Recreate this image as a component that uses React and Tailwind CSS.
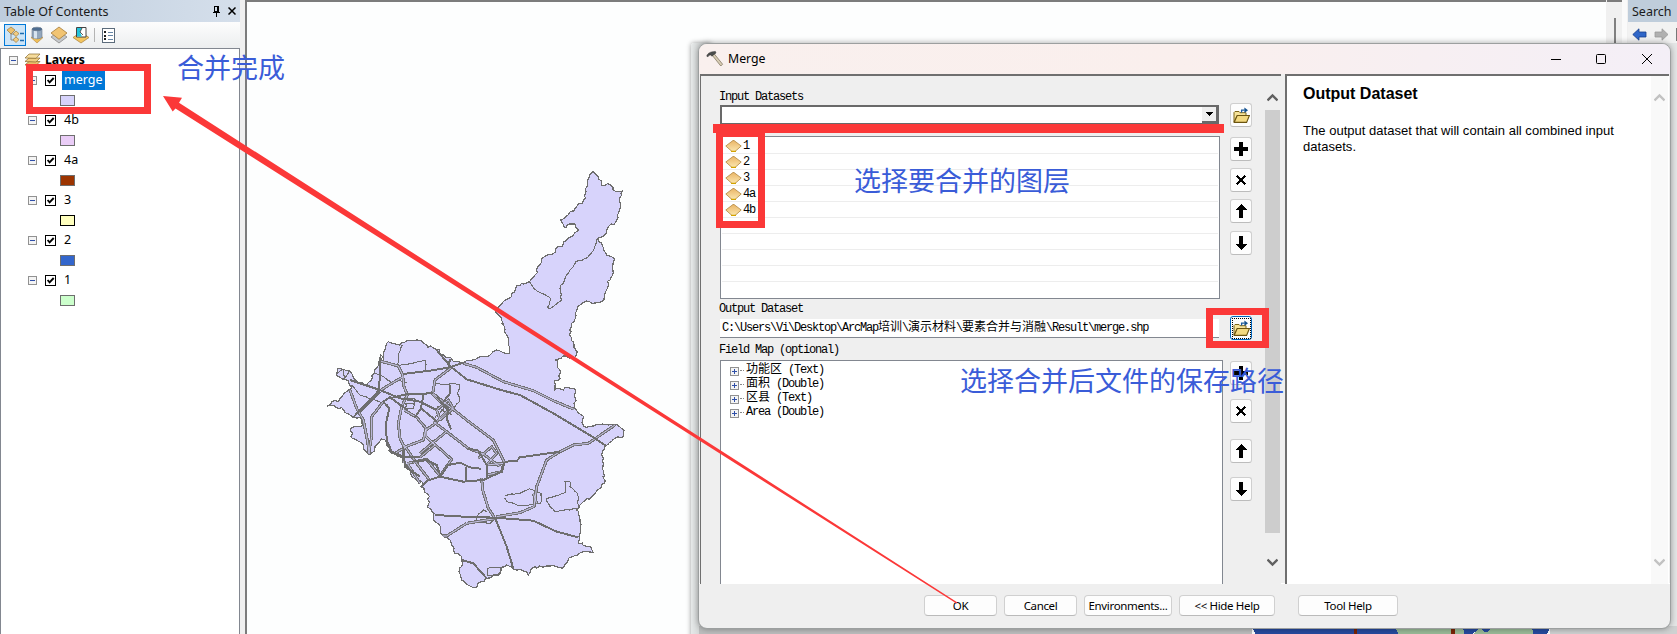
import React from "react";

/* ---------- map geometry ---------- */

function parse(s) {
  return s.trim().split(/\s+/).map((p) => p.split(",").map(Number));
}

// Roughens a polyline so that borders look surveyed rather than ruled.
function roughen(points, amp, closed) {
  let seed = 7;
  const rnd = () => {
    seed = (seed * 16807) % 2147483647;
    return seed / 2147483647 - 0.5;
  };
  const out = [];
  const n = closed ? points.length : points.length - 1;
  for (let i = 0; i < n; i++) {
    const [x1, y1] = points[i];
    const [x2, y2] = points[(i + 1) % points.length];
    const len = Math.hypot(x2 - x1, y2 - y1);
    const steps = Math.max(1, Math.round(len / 9));
    for (let k = 0; k < steps; k++) {
      const t = k / steps;
      const j = k === 0 ? 0 : amp;
      out.push([x1 + (x2 - x1) * t + rnd() * j, y1 + (y2 - y1) * t + rnd() * j]);
    }
  }
  if (!closed) out.push(points[points.length - 1]);
  return out.map((p) => p[0].toFixed(1) + "," + p[1].toFixed(1)).join(" ");
}

const OUTLINE = roughen(
  parse(`820,-475 843,-448 845,-434 870,-436 888,-415 907,-417 898,-395 898,-360 888,-325 865,-310 858,-288 832,-275
  858,-230 880,-217 878,-185 870,-150 855,-110 852,-90 835,-83 800,-87 775,-72 768,-45 755,-20 748,15 762,45 770,70 762,85
  737,78 707,90 720,120 720,145 703,153 703,180 730,180 745,173 768,180 763,235 785,255 792,290 830,283 890,283 912,300
  910,318 880,328 855,348 845,375 850,400 852,460 820,495 780,525 770,540 780,575 775,640 800,650 812,650 820,668 790,665
  745,685 728,715 690,708 635,715 625,735 600,718 580,718 560,705 543,712 535,735 497,745 470,772 450,768 425,750 417,725
  428,700 425,680 405,670 390,630 368,615 362,590 340,570 342,550 322,530 328,500 303,470 310,460 295,450 275,440 262,410
  250,395 240,380 215,370 195,330 185,327 165,350 150,375 140,365 130,345 97,325 98,310 90,300 95,292 128,285 127,265
  100,262 65,233 22,228 35,215 55,215 85,180 95,170 80,150 52,140 52,115 90,125 100,145 140,165 165,130 175,95 190,90
  195,60 205,35 240,45 262,32 300,32 320,45 350,58 365,75 395,88 430,98 480,80 510,75 530,60 550,68 567,70 565,40 555,0
  545,-30 527,-60 550,-85 575,-100 590,-132 612,-138 628,-145 645,-165 665,-215 697,-227 740,-270 775,-300 765,-318
  730,-310 722,-330 765,-365 797,-395 803,-450`),
  9,
  true
);

const BORDERS = [
  "832,-275 822,-242 802,-217 768,-205 740,-165 720,-125 724,-88 690,-63 683,-68 692,-95 650,-118 628,-145",
  "556,498 575,492 600,490 628,476 663,490 662,520 598,528 560,515 553,503",
  "678,508 700,500 735,488 735,455 750,455 750,470 772,490 776,535 705,545 690,530 678,508",
  "503,715 540,712 543,722 532,735 503,737 503,715",
  "247,45 235,75 233,105",
  "240,106 316,92 317,122",
  "52,130 70,118 72,148 90,122",
  "180,95 180,72 188,80 175,100",
  "165,130 190,140 215,160 235,150 262,158",
  "95,165 120,195 170,212 205,225",
  "345,160 375,165 395,160 420,165 412,190 420,210 400,235 380,245",
  "258,205 285,207 280,235 255,237 258,220 282,222",
  "350,230 395,255 380,225 345,262",
  "470,560 490,540 500,545",
  "470,560 472,575 510,580 530,560",
].map((s) => roughen(parse(s), 4, false));

const DOUBLE_ROADS = [
  "430,100 470,112 550,155 640,182 700,212 762,238",
  "180,93 235,108 248,135 252,170 262,195 245,230 235,280 240,325 252,350 252,400",
  "180,182 215,160 250,140",
  "395,112 345,150 338,190",
  "338,190 370,215 440,270 520,330 552,395 545,425 500,435",
  "335,190 385,240 340,285 318,300 318,320 345,345 300,382",
  "340,275 380,305 445,355 490,372 540,410",
  "318,320 395,388 360,438",
  "380,305 330,345 300,370",
  "252,345 290,400 328,450",
  "262,400 300,460",
  "90,180 110,235 130,270 142,330 148,372",
  "190,215 155,260 155,320 146,370",
  "252,240 290,262 318,295 310,330 262,348 225,370",
  "262,400 320,388 360,438",
  "475,385 515,350 530,370 500,405",
  "500,405 552,400",
  "530,560 600,548 642,530 650,470 680,390 720,365 760,345 805,340 885,285",
  "485,445 488,480 505,535 528,570",
  "440,580 380,618 368,618",
  "530,565 440,580",
  "650,520 640,490",
  "350,240 385,210 400,235 360,270 350,240",
];

const SOLID_ROADS = [
  "350,60 390,108 440,148 550,182 600,195 700,250 820,322 858,348",
  "250,132 330,122 390,112 430,98",
  "345,555 430,560 525,563 640,572 710,605 775,622",
  "525,563 540,600 560,650 580,715",
  "425,690 460,700 500,745",
  "90,150 180,180 240,205 300,215 350,240",
  "180,80 178,180 125,235 100,262",
  "180,185 120,245",
  "262,192 340,190",
  "208,205 262,192",
  "208,235 198,280 200,330 215,365 255,382 300,380",
  "208,235 190,215 210,202 262,240",
  "310,195 303,235 340,265 350,275",
  "285,262 303,235",
  "350,200 385,240 380,265 393,298",
  "250,350 255,410 300,440",
  "275,395 320,390 350,405 362,438",
  "328,450 360,440 430,455 490,450 545,425 552,395",
  "362,438 385,405 420,398 450,412 482,416",
  "438,412 438,455",
  "445,355 475,362 500,405 500,445",
  "555,395 590,393 600,382 720,365",
  "303,470 328,448",
  "385,110 390,88",
  "390,165 390,190 370,215",
];

function MapShape() {
  return (
    <svg
      className="block h-[634px] w-[1358px]"
      viewBox="247 2 1358 634"
      preserveAspectRatio="xMinYMin slice"
      shapeRendering="crispEdges"
      fill="none"
    >
      <g transform="translate(320 330) scale(0.33333)" stroke="#6e6e6e" strokeLinejoin="round">
        <polygon points={OUTLINE} fill="#d7d3fb" strokeWidth="3.6" />
        {BORDERS.map((p, i) => (
          <polyline key={i} points={p} strokeWidth="3.2" />
        ))}
        {DOUBLE_ROADS.map((p, i) => (
          <polyline key={i} points={p} strokeWidth="9" />
        ))}
        {DOUBLE_ROADS.map((p, i) => (
          <polyline key={i} points={p} strokeWidth="2.6" stroke="#d7d3fb" />
        ))}
        {SOLID_ROADS.map((p, i) => (
          <polyline key={i} points={p} strokeWidth="6" />
        ))}
      </g>
      <g transform="translate(0 2)">
        <path d="M1252 626H1397L1402 634H1257Z" fill="#264a9e" />
        <path d="M1395 626H1466L1470 634H1400Z" fill="#9abb98" />
        <path d="M1463 626H1480L1470 634H1465Z" fill="#264a9e" />
        <path d="M1480 626H1533V634H1471Z" fill="#9abb98" />
        <path d="M1532 626H1550L1546 634H1534Z" fill="#264a9e" />
        <path d="M1482 627H1490L1487 630H1484Z" fill="#264a9e" />
        <path d="M1354 626h3v8h-3ZM1451 626h4v8h-4Z" fill="#7a2406" />
      </g>
    </svg>
  );
}

/* ---------- small drawings ---------- */

function Expander({ plus }) {
  return (
    <svg className="block h-[9px] w-[9px] shrink-0" viewBox="0 0 9 9" shapeRendering="crispEdges">
      <rect x="0.5" y="0.5" width="8" height="8" fill="#f4f4f4" stroke="#919191" />
      <path d={plus ? "M2 4.5h5M4.5 2v5" : "M2 4.5h5"} stroke="#2f4fa8" fill="none" />
    </svg>
  );
}

function Check() {
  return (
    <svg className="block h-[11px] w-[11px] shrink-0" viewBox="0 0 11 11">
      <rect x="0.5" y="0.5" width="10" height="10" fill="#fff" stroke="#000" />
      <path d="M2.6 5l2 2.4L8.7 3" fill="none" stroke="#000" strokeWidth="1.9" />
    </svg>
  );
}

function Diamond() {
  return (
    <svg className="block h-[12px] w-[17px] shrink-0" viewBox="0 0 17 12">
      <defs>
        <linearGradient id="dia" x1="0" y1="0" x2="0" y2="1">
          <stop offset="0" stopColor="#eab566" />
          <stop offset="1" stopColor="#fbe7b0" />
        </linearGradient>
      </defs>
      <path d="M.8 6L8 .5h1L16.2 6 10 11.5H7Z" fill="url(#dia)" stroke="#b88f4a" strokeWidth="0.9" />
      <path d="M6 11.4h5" stroke="#d3a300" strokeWidth="1.1" />
    </svg>
  );
}

function FolderIcon() {
  return (
    <svg className="block h-[17px] w-[17px]" viewBox="0 0 17 17">
      <path d="M1 15V5.5l1-1h4l1 1.2h6V8.500L4.200 8.500Z" fill="#f6e39a" stroke="#7c6418" strokeWidth="1" />
      <path d="M1.2 15.4L4.2 8.5H16.4L13.6 15.4Z" fill="#f3d980" stroke="#6b5410" strokeWidth="1.1" />
      <path d="M8.6 5.6V3.2h3" fill="none" stroke="#1a5a9c" strokeWidth="1.3" />
      <path d="M11.4.6L15 3.3 11.4 6Z" fill="#12508f" />
    </svg>
  );
}

const GLYPHS = {
  plus: "M5 0h4v5h5v4H9v5H5V9H0V5h5Z",
  cross: "M2 3.6L3.6 2 7 5.4 10.4 2 12 3.6 8.6 7 12 10.4 10.4 12 7 8.6 3.6 12 2 10.4 5.4 7Z",
  up: "M7 0l6 6H9v8H5V6H1Z",
  down: "M7 14L1 8h4V0h4v8h4Z",
};

function ToolButton({ glyph, focused, className = "" }) {
  return (
    <div
      className={
        "flex h-[24px] w-[22px] shrink-0 items-center justify-center rounded-[3px] bg-[#fdfdfd] " +
        (focused ? "border border-[#0067c0] " : "border border-[#cfcfcf] border-b-[#bcbcbc] ") +
        className
      }
    >
      {glyph === "folder" ? (
        focused ? (
          <div className="flex h-[21px] w-[19px] items-center justify-center border border-dotted border-black">
            <FolderIcon />
          </div>
        ) : (
          <FolderIcon />
        )
      ) : (
        <svg className="block h-[14px] w-[14px]" viewBox="0 0 14 14" shapeRendering="crispEdges">
          <path d={GLYPHS[glyph]} fill="#000" />
        </svg>
      )}
    </div>
  );
}

function Chevron({ down, color }) {
  return (
    <svg className="block h-[9px] w-[11px]" viewBox="0 0 11 9">
      <path d={down ? "M.5 1.5l5 5 5-5" : "M.5 7.5l5-5 5 5"} fill="none" stroke={color} strokeWidth="2.4" />
    </svg>
  );
}

function Hammer() {
  return (
    <svg className="block h-[18px] w-[18px]" viewBox="0 0 18 18">
      <path d="M6 5L8 3.6 16.6 14.2 14.8 16Z" fill="#d8cdb4" stroke="#857a66" strokeWidth="0.8" />
      <path d="M.8 6.2C1 4 3.5 1.6 9.4 1.4L10 3 8 4.4 6 6.2 4.6 5 3 5.2 2 6.8Z" fill="#4a4d4c" stroke="#333" strokeWidth="0.5" />
    </svg>
  );
}

/* ---------- table of contents ---------- */

function TocToolbar() {
  return (
    <div className="flex h-[26px] items-center bg-gradient-to-b from-[#fdfdfd] to-[#eceeef] pl-[4px]">
      <div className="flex h-[22px] w-[22px] items-center justify-center border border-[#0078d7] bg-[#cce4f7]">
        <svg className="h-[18px] w-[18px]" viewBox="0 0 18 18">
          <path d="M5 6v8h4M5 8h5" fill="none" stroke="#888" />
          <path d="M5 1L9 4 5 8 1 4Z" fill="#eec06c" stroke="#9b7a3c" strokeWidth=".7" />
          <path d="M10 5l3 2.6-3 2.9-3-2.9ZM10 11l3 2.6-3 2.9-3-2.9Z" fill="#f2cc83" stroke="#9b7a3c" strokeWidth=".7" />
          <path d="M14 7.5h4M14 14.5h4" stroke="#1c6db0" strokeWidth="1.4" />
        </svg>
      </div>
      <svg className="ml-[2px] h-[18px] w-[18px]" viewBox="0 0 18 18">
        <path d="M3 11.5L9 17 15 11.5 9 9Z" fill="#f0bf58" stroke="#b3853a" strokeWidth=".6" />
        <path d="M4 3v8c0 2.400 10 2.400 10 0V3Z" fill="#93a7bd" stroke="#6b7b8d" strokeWidth=".6" />
        <path d="M6 4v8.400h3V4Z" fill="#d8e4f0" />
        <ellipse cx="9" cy="3" rx="5" ry="1.800" fill="#4d6c90" stroke="#66758a" strokeWidth=".6" />
      </svg>
      <svg className="ml-[4px] h-[18px] w-[18px]" viewBox="0 0 18 18">
        <path d="M1 11l8-6 8 6-8 6Z" fill="#c5c8cb" stroke="#7d7d7d" strokeWidth=".7" />
        <path d="M1 7l8-6 8 6-8 6.300Z" fill="#f1c473" stroke="#a67c38" strokeWidth=".8" />
      </svg>
      <svg className="ml-[4px] h-[18px] w-[18px]" viewBox="0 0 18 18">
        <path d="M1 11.500L9 6l8 5.500-8 5.500Z" fill="#f3c55f" stroke="#a67c38" strokeWidth=".7" />
        <path d="M4.500 1.500h9.500v9.500H4.500Z" fill="#fff" stroke="#444" strokeWidth="1" />
        <path d="M5 2h5l-2 4 2 4.500H5Z" fill="#22c4dc" />
        <path d="M10 2L8 6l3 3" fill="none" stroke="#333" strokeWidth=".8" />
      </svg>
      <div className="ml-[4px] h-[14px] w-px bg-[#b4b4b4]" />
      <svg className="ml-[7px] h-[15px] w-[13px]" viewBox="0 0 13 15" shapeRendering="crispEdges">
        <path d="M.5.5h12v14H.5Z" fill="#fff" stroke="#5b6b7b" />
        <path d="M2 3h2v2h-2ZM2 6.500h2v2h-2ZM2 10h2v2h-2Z" fill="#222" />
        <path d="M6 4.500h5M6 7.500h5M6 11.500h5" stroke="#6685a5" />
      </svg>
    </div>
  );
}

const LAYERS = [
  { name: "merge", swatch: "bg-[#d7d3fb] border-[#6e6e6e]", selected: true },
  { name: "4b", swatch: "bg-[#eacdf7] border-[#6e6e6e]" },
  { name: "4a", swatch: "bg-[#9c3400] border-[#6e6e6e]" },
  { name: "3", swatch: "bg-[#ffffbe] border-black" },
  { name: "2", swatch: "bg-[#3366cc] border-[#6e6e6e]" },
  { name: "1", swatch: "bg-[#ccffcc] border-[#6e6e6e]" },
];

function Toc() {
  return (
    <div className="flex h-full w-[240px] shrink-0 flex-col text-[12.5px] leading-none">
      <div className="flex h-[22px] items-center bg-gradient-to-r from-[#becddd] to-[#d5dfeb] pl-[4px]">
        <span className="w-[208px] whitespace-nowrap pt-[2px] text-[12.5px] text-[#1a1a1a]">Table Of Contents</span>
        <svg className="h-[11px] w-[8px]" viewBox="0 0 8 11" shapeRendering="crispEdges">
          <path d="M2.500 0.500h3.500v5h-3.500Z M0.500 6.500h7M4 6.500v4" stroke="#000" fill="none" />
          <path d="M5 1h1v5h-1Z" />
        </svg>
        <svg className="ml-[8px] h-[8px] w-[8px]" viewBox="0 0 8 8">
          <path d="M.5.5l7 7M7.500.5l-7 7" stroke="#000" strokeWidth="1.500" />
        </svg>
      </div>
      <TocToolbar />
      <div className="min-h-0 flex-1 overflow-hidden border-x border-t border-[#828790] bg-white">
        <div className="flex h-[22px] items-center pl-[8px]">
          <Expander />
          <svg className="ml-[6px] h-[14px] w-[17px]" viewBox="0 0 17 14">
            <path d="M1 12l4-3.500h11L12 12.500Z" fill="#e8c06a" stroke="#8a6a2c" strokeWidth=".7" />
            <path d="M1 8.500L5 5h11L12 9Z" fill="#f0cd80" stroke="#8a6a2c" strokeWidth=".7" />
            <path d="M1 5L5 1h11L12 5.300Z" fill="#f6dc9c" stroke="#8a6a2c" strokeWidth=".7" />
          </svg>
          <span className="ml-[4px] text-[12.2px] font-bold">Layers</span>
        </div>
        {LAYERS.map((l) => (
          <div key={l.name} className="flex h-[40px] flex-col">
            <div className="flex h-[19px] items-center pl-[27px]">
              <Expander />
              <div className="ml-[8px]">
                <Check />
              </div>
              <span
                className={
                  "ml-[6px] flex h-[19px] items-center px-[2px] " +
                  (l.selected ? "bg-[#0078d7] text-white" : "text-black")
                }
              >
                {l.name}
              </span>
            </div>
            <div className={"ml-[59px] mt-[5px] h-[11px] w-[15px] border " + l.swatch} />
          </div>
        ))}
      </div>
    </div>
  );
}

/* ---------- merge dialog ---------- */

const MONO = "font-['Liberation_Mono','Noto_Sans_CJK_SC',monospace] text-[12px] tracking-[-1.2px] leading-none whitespace-pre text-black";
const HAN = "text-[12px] tracking-normal";

function Pane() {
  return (
    <div className="ml-px flex h-[510px] w-[581px] shrink-0 overflow-hidden border-l border-t-2 border-[#6f6f6f] bg-[#efefef]">
      <div className="flex w-[509px] shrink-0 flex-col pl-[19px]">
        <div className={"-ml-px mt-[14px] flex h-[14px] shrink-0 items-center " + MONO}>Input Datasets</div>
        <div className="mt-[1px] flex h-[19px] w-[499px] shrink-0 justify-end border-2 border-b border-r border-[#696969] bg-white">
          <div className="flex h-full w-[16px] items-center justify-center border-b-2 border-r-2 border-[#696969] bg-[#efefef]">
            <svg className="h-[4px] w-[7px]" viewBox="0 0 7 4" shapeRendering="crispEdges">
              <path d="M0 0h7L3.500 4Z" />
            </svg>
          </div>
        </div>
        <div className="mt-[12px] flex h-[163px] w-[500px] shrink-0 flex-col border border-[#828790] bg-white px-[1px]">
          {["1", "2", "3", "4a", "4b"].map((n, i) => (
            <div key={n} className={"flex shrink-0 items-center border-b border-[#ededed] pl-[3px] pt-px " + (i === 0 ? "h-[17px]" : "h-[16px]")}>
              <Diamond />
              <span className={"ml-[1px] " + MONO}>{n}</span>
            </div>
          ))}
          {[5, 6, 7, 8].map((n) => (
            <div key={n} className="h-[16px] shrink-0 border-b border-[#ededed]" />
          ))}
        </div>
        <div className={"-ml-px mt-[2px] flex h-[16px] shrink-0 items-center " + MONO}>Output Dataset</div>
        <div className={"mt-[2px] flex h-[19px] w-[499px] shrink-0 items-center border-b border-[#828790] bg-white pl-[2px] " + MONO}>
          <span>C:\Users\Vi\Desktop\ArcMap</span>
          <span className={HAN}>培训</span>
          <span>\</span>
          <span className={HAN}>演示材料</span>
          <span>\</span>
          <span className={HAN}>要素合并与消融</span>
          <span>\Result\merge.shp</span>
        </div>
        <div className={"-ml-px mt-[5px] flex h-[14px] shrink-0 items-center " + MONO}>Field Map (optional)</div>
        <div className="mt-[3px] flex h-[240px] w-[503px] shrink-0 flex-col border border-[#828790] bg-white pl-[9px] pt-[2px]">
          {[
            ["功能区", " (Text)"],
            ["面积", " (Double)"],
            ["区县", " (Text)"],
            ["", "Area (Double)"],
          ].map(([h, t], i) => (
            <div key={i} className={"flex h-[14px] shrink-0 items-center " + MONO}>
              <div className="pt-[2px]">
                <Expander plus />
              </div>
              <div className="ml-[1px] mr-[2px] w-[4px] border-b border-dotted border-[#888]" />
              <span className={HAN}>{h}</span>
              <span>{t}</span>
            </div>
          ))}
        </div>
      </div>
      <div className="ml-[20px] flex w-[22px] shrink-0 flex-col">
        <ToolButton glyph="folder" className="mt-[27px]" />
        <ToolButton glyph="plus" className="mt-[10px]" />
        <ToolButton glyph="cross" className="mt-[7px]" />
        <ToolButton glyph="up" className="mt-[7px]" />
        <ToolButton glyph="down" className="mt-[8px]" />
        <ToolButton glyph="folder" focused className="mt-[61px]" />
        <ToolButton glyph="plus" className="mt-[21px]" />
        <ToolButton glyph="cross" className="mt-[14px]" />
        <ToolButton glyph="up" className="mt-[16px]" />
        <ToolButton glyph="down" className="mt-[14px]" />
      </div>
      <div className="ml-[13px] flex w-[15px] shrink-0 flex-col items-center">
        <div className="mt-[17px]">
          <Chevron color="#606060" />
        </div>
        <div className="mt-[8px] h-[423px] w-full bg-[#cdcdcd]" />
        <div className="mt-[25px]">
          <Chevron down color="#606060" />
        </div>
      </div>
    </div>
  );
}

function HelpPane() {
  return (
    <div className="ml-[4px] flex h-[510px] w-[384px] shrink-0 border-l-2 border-t-2 border-[#6f6f6f] bg-white">
      <div className="w-[364px] pl-[16px] font-['Liberation_Sans',Arial,sans-serif] text-black">
        <div className="mt-[8px] text-[16px] font-bold leading-[20px]">Output Dataset</div>
        <div className="mt-[19px] w-[330px] text-[13px] leading-[16px] tracking-[0.03px]">
          The output dataset that will contain all combined input datasets.
        </div>
      </div>
      <div className="flex w-[17px] flex-col items-center justify-between bg-[#f9f9f9] pb-[17px] pt-[17px]">
        <Chevron color="#c2c2c2" />
        <Chevron down color="#c2c2c2" />
      </div>
    </div>
  );
}

function FootButton({ children, className }) {
  return (
    <div
      className={
        "flex h-[21px] shrink-0 items-center justify-center whitespace-nowrap rounded-[4px] border border-[#d0d0d0] border-b-[#bababa] bg-[#fdfdfd] text-[11.5px] leading-none tracking-[-0.35px] text-black " +
        className
      }
    >
      {children}
    </div>
  );
}

function Dialog() {
  return (
    <div className="absolute left-[698px] top-[43px] flex h-[586px] w-[973px] flex-col overflow-hidden rounded-[9px] border border-[#9c9f9f] bg-[#efefef] shadow-[0_0_6px_rgba(0,0,0,0.35)]">
      <div className="flex h-[30px] shrink-0 items-center bg-gradient-to-r from-[#f9f0ee] via-[#faefed] to-[#f4eff7] pl-[7px]">
        <Hammer />
        <span className="ml-[4px] w-[823px] text-[12.3px] leading-none text-black">Merge</span>
        <svg className="h-[12px] w-[104px]" viewBox="0 0 104 12" fill="none" stroke="#000">
          <path d="M0 6.500h10" />
          <rect x="45.500" y="1.500" width="9" height="9" rx="1" />
          <path d="M91 1l10 10M101 1L91 11" />
        </svg>
      </div>
      <div className="flex h-[510px] shrink-0 border-b border-white">
        <Pane />
        <HelpPane />
      </div>
      <div className="flex pt-[11px]">
        <FootButton className="ml-[225px] w-[73px]">OK</FootButton>
        <FootButton className="ml-[7px] w-[73px]">Cancel</FootButton>
        <FootButton className="ml-[7px] w-[88px]">Environments...</FootButton>
        <FootButton className="ml-[7px] w-[96px]">&lt;&lt; Hide Help</FootButton>
        <FootButton className="ml-[23px] w-[100px]">Tool Help</FootButton>
      </div>
    </div>
  );
}

/* ---------- right edge ---------- */

function SearchPanel() {
  return (
    <div className="flex h-full w-[49px] shrink-0 flex-col overflow-hidden">
      <div className="flex h-[22px] items-center bg-[#bfcddb] pl-[4px] pt-[2px] text-[12.5px] leading-none text-[#1a1a1a]">Search</div>
      <div className="flex h-[21px] items-center bg-[#f2f2f2] pl-[4px]">
        <svg className="mt-[4px] h-[13px] w-[45px]" viewBox="0 0 45 13">
          <path d="M.8 6.500L7 .8V4h7v5H7v3.200Z" fill="#2f66c8" stroke="#183f8c" strokeWidth=".8" />
          <path d="M36 6.500L30 .8V4h-7v5h7v3.200Z" fill="#b0b0b0" stroke="#999" strokeWidth=".8" />
          <path d="M44.500 0v13" stroke="#777" strokeWidth="1" />
        </svg>
      </div>
      <div className="flex-1 bg-[#e4e6e6]" />
    </div>
  );
}

/* ---------- overlay notes ---------- */

const NOTE = "absolute whitespace-nowrap font-['Noto_Sans_CJK_SC',sans-serif] text-[27px] leading-[30px] text-[#3a5cd8]";

export default function App() {
  return (
    <div className="relative h-[634px] w-[1677px] overflow-hidden bg-[#f0f0f0] font-['Noto_Sans','Open_Sans',sans-serif] text-black">
      <div className="flex h-full">
        <Toc />
        <div className="ml-[5px] h-full w-[1361px] shrink-0 overflow-hidden border-l-2 border-t-2 border-[#7c7c7c] bg-[#fdfefe]">
          <MapShape />
        </div>
        <div className="ml-[1px] flex h-full w-[15px] shrink-0 justify-center border-t-2 border-[#7c7c7c]">
          <div className="mt-[16px] h-[26px] w-[2px] bg-[#808080]" />
        </div>
        <div className="mr-[1px] w-[5px] shrink-0 bg-[#fafafa]" />
        <SearchPanel />
      </div>

      <div className="absolute left-[691px] top-[43px] h-[600px] w-[20px] rounded-tl-[3px] bg-gradient-to-r from-[#e6e9e9] to-[#bfc2c2] shadow-[0_0_5px_rgba(0,0,0,0.4)]" />
      <div className="absolute left-[699px] top-[626px] h-[8px] w-[553px] bg-[#bcbebe]" />
      <div className="absolute left-[1550px] top-[626px] h-[8px] w-[127px] bg-[#cfd1d1]" />
      <Dialog />

      <div className="absolute left-[713px] top-[124px] h-[9px] w-[511px] bg-[#fb3838]" />
      <div className="absolute left-[716px] top-[130px] h-[98px] w-[49px] border-[7px] border-[#fb3838]" />
      <div className="absolute left-[1206px] top-[308px] h-[40px] w-[63px] border-[7px] border-[#fb3838]" />
      <div className="absolute left-[26px] top-[64px] h-[50px] w-[125px] border-[7px] border-[#fb3838]" />
      <svg className="pointer-events-none absolute left-0 top-0 h-[634px] w-[1677px]" viewBox="0 0 1677 634">
        <path d="M163 96L182 97.700 179 102.700 957.500 602.500 956.500 603.500 175.500 108.500 172.700 111.500Z" fill="#fb3838" />
      </svg>

      <div className={"left-[177px] top-[52px] " + NOTE}>合并完成</div>
      <div className={"left-[854px] top-[165px] " + NOTE}>选择要合并的图层</div>
      <div className={"left-[960px] top-[365px] " + NOTE}>选择合并后文件的保存路径</div>
    </div>
  );
}
